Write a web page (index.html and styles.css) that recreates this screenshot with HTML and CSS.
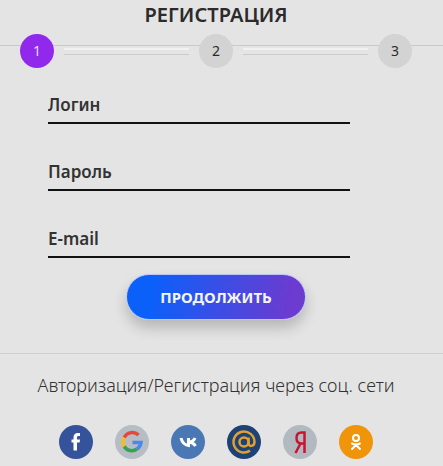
FILE: index.html
```html
<!DOCTYPE html>
<html lang="ru">
<head>
    <meta charset="UTF-8">
    <meta name="viewport" content="width=device-width, initial-scale=1.0">
    <title>Регистрация</title>
    <link rel="stylesheet" href="styles.css">
</head>
<body>
    <h1>РЕГИСТРАЦИЯ</h1>

    <ol class="steps">
        <li class="step active">1</li>
        <li class="line"></li>
        <li class="step">2</li>
        <li class="line"></li>
        <li class="step">3</li>
    </ol>

    <form class="form">
        <input type="text" name="login" placeholder="Логин" aria-label="Логин">
        <input type="password" name="password" placeholder="Пароль" aria-label="Пароль">
        <input type="email" name="email" placeholder="E-mail" aria-label="E-mail">
        <button class="button" type="submit">ПРОДОЛЖИТЬ</button>
    </form>

    <div class="social">
        <p>Авторизация/Регистрация через соц. сети</p>
        <div class="icons">
            <a href="#" aria-label="Facebook">
                <svg viewBox="0 0 34 34">
                    <circle cx="17" cy="17" r="17" fill="#35539a"/>
                    <path d="M14.500 25.500V17.500h-2v-3h2v-2c0-3 1.600-4.500 4.300-4.500h2.200v3h-1.400c-1.300 0-1.600.6-1.600 1.600v1.900h3l-.4 3H18v8z" fill="#fff"/>
                </svg>
            </a>
            <a href="#" aria-label="Google">
                <svg viewBox="0 0 34 34" fill="none" stroke-width="3.500">
                    <circle cx="17" cy="17" r="17" fill="#b6bdc5"/>
                    <path d="M23.500 10A9 9 0 0 0 9.200 12.500" stroke="#e5483b"/>
                    <path d="M9.200 12.500A9 9 0 0 0 9.200 21.500" stroke="#f5bd20"/>
                    <path d="M9.200 21.500A9 9 0 0 0 22 24" stroke="#34a353"/>
                    <path d="M22 24A9 9 0 0 0 26 17.500H17.500" stroke="#4a88ec"/>
                </svg>
            </a>
            <a href="#" aria-label="ВКонтакте">
                <svg viewBox="0 0 34 34" fill="none">
                    <circle cx="17" cy="17" r="17" fill="#4a78b5"/>
                    <path d="M10 13c1 4 3 7 7.500 7.500V13M24 13c-1 2.500-3 3.800-6 4 3 .3 5 1.500 6.500 4" stroke="#fff" stroke-width="3"/>
                </svg>
            </a>
            <a href="#" aria-label="Mail.ru">
                <svg viewBox="0 0 34 34" fill="none">
                    <circle cx="17" cy="17" r="17" fill="#1d4273"/>
                    <circle cx="17" cy="17" r="4.500" stroke="#e0a032" stroke-width="2.500"/>
                    <path d="M21.500 12.500V18c0 4.500 6 3.500 6-1A10.500 10.500 0 1 0 23 25.600" stroke="#e0a032" stroke-width="2.500"/>
                </svg>
            </a>
            <a href="#" aria-label="Яндекс">
                <svg viewBox="0 0 34 34" fill="none">
                    <circle cx="17" cy="17" r="17" fill="#b1bac1"/>
                    <path d="M21.500 28V7.500h-3c-3 0-5 2-5 5.500s2 5.500 5 5.500h3M17.500 18.500L12.500 28" stroke="#c8152f" stroke-width="2.500"/>
                </svg>
            </a>
            <a href="#" aria-label="Одноклассники">
                <svg viewBox="0 0 34 34" fill="none">
                    <circle cx="17" cy="17" r="17" fill="#f09409"/>
                    <circle cx="17" cy="13" r="3" stroke="#fff" stroke-width="2"/>
                    <path d="M13 18.500c3 1.500 5 1.500 8 0M17 20l-4 4M17 20l4 4" stroke="#fff" stroke-width="2" stroke-linecap="round"/>
                </svg>
            </a>
        </div>
    </div>
</body>
</html>
```
FILE: styles.css
```css
* {
    box-sizing: border-box;
}
body {
    font-family: "Noto Sans", "Open Sans", sans-serif;
    margin: 0;
    background-color: #e5e4e5;
    color: #2b2b2b;
}
h1 {
    margin: 0;
    padding: 2px 11px 0 0;
    font-size: 20px;
    line-height: 26px;
    font-weight: 600;
    text-align: center;
}
.steps {
    display: flex;
    align-items: center;
    margin: 6px 0 0;
    padding: 0 31px 0 20px;
    list-style: none;
    background: linear-gradient(#c9c9c9, #c9c9c9) 0 11px / 100% 1px no-repeat;
}
.step {
    width: 34px;
    height: 34px;
    border-radius: 50%;
    background-color: #d3d3d3;
    font-size: 14px;
    line-height: 34px;
    text-align: center;
}
.step.active {
    background-color: #9129ec;
    color: #eadcf8;
}
.line {
    flex: 1;
    height: 7px;
    margin: 0 10px;
    border-top: 2px solid #f1f1f1;
    border-bottom: 1px solid #cccccc;
}
.form {
    display: flex;
    flex-direction: column;
    padding: 18px 93px 33px 48px;
}
.form input {
    width: 100%;
    height: 38px;
    margin-bottom: 29px;
    padding: 0;
    border: none;
    border-bottom: 2px solid #111111;
    border-radius: 0;
    outline: none;
    background: transparent;
    color: #2b2b2b;
    font-family: inherit;
    font-size: 17px;
    font-weight: 600;
}
.form input::placeholder {
    color: #333333;
    opacity: 1;
}
.form input:last-of-type {
    margin-bottom: 16px;
}
.button {
    align-self: center;
    width: 180px;
    height: 46px;
    margin-left: 34px;
    border: 1px solid #b9c8f5;
    border-radius: 23px;
    background: linear-gradient(100deg, #0b60fa 15%, #6c3bd0 90%) border-box;
    box-shadow: 0 8px 14px rgba(0, 0, 0, 0.2);
    color: #f3f5ff;
    font-family: inherit;
    font-size: 15px;
    font-weight: 700;
    cursor: pointer;
}
.social {
    padding: 18px 11px 7px 0;
    border-top: 1px solid #cfcfcf;
}
.social p {
    margin: 0;
    font-size: 18px;
    font-weight: 300;
    line-height: 26px;
    text-align: center;
    color: #333333;
}
.icons {
    display: flex;
    justify-content: center;
    gap: 22px;
    margin-top: 27px;
}
.icons a {
    width: 34px;
    height: 34px;
}
.icons svg {
    display: block;
}
```
